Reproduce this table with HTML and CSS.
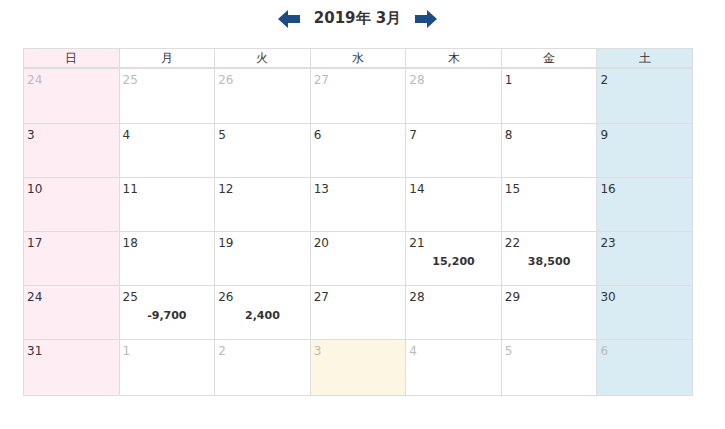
FILE: index.html
```html
<!DOCTYPE html>
<html>
<head>
<meta charset="utf-8">
<link rel="stylesheet" href="styles.css">
</head>
<body>
<div class="page">
  <div class="nav">
    <svg class="arrow" width="22" height="18" viewBox="0 0 22 18"><polygon points="0,9 10,0 10,5 22,5 22,13 10,13 10,18" fill="#1d4b83"/></svg>
    <span class="title">2019年 3月</span>
    <svg class="arrow" width="22" height="18" viewBox="0 0 22 18"><polygon points="22,9 12,0 12,5 0,5 0,13 12,13 12,18" fill="#1d4b83"/></svg>
  </div>
  <table class="cal">
    <thead>
      <tr><th class="sun">日</th><th>月</th><th>火</th><th>水</th><th>木</th><th>金</th><th class="sat">土</th></tr>
    </thead>
    <tbody>
      <tr class="first"><td class="sun other">24</td><td class="other">25</td><td class="other">26</td><td class="other">27</td><td class="other">28</td><td>1</td><td class="sat">2</td></tr>
      <tr><td class="sun">3</td><td>4</td><td>5</td><td>6</td><td>7</td><td>8</td><td class="sat">9</td></tr>
      <tr><td class="sun">10</td><td>11</td><td>12</td><td>13</td><td>14</td><td>15</td><td class="sat">16</td></tr>
      <tr><td class="sun">17</td><td>18</td><td>19</td><td>20</td><td>21<div class="amt">15,200</div></td><td>22<div class="amt">38,500</div></td><td class="sat">23</td></tr>
      <tr><td class="sun">24</td><td>25<div class="amt">-9,700</div></td><td>26<div class="amt">2,400</div></td><td>27</td><td>28</td><td>29</td><td class="sat">30</td></tr>
      <tr class="last"><td class="sun">31</td><td class="other">1</td><td class="other">2</td><td class="other today">3</td><td class="other">4</td><td class="other">5</td><td class="sat other">6</td></tr>
    </tbody>
  </table>
</div>
</body>
</html>
```
FILE: styles.css
```css
html, body { margin: 0; padding: 0; background: #fff; }
body { font-family: "DejaVu Sans", Verdana, sans-serif; color: #333; }
.page { padding: 8px 23px 0 23px; }
.nav { display: flex; justify-content: center; align-items: center; gap: 14px; height: 21px; margin-bottom: 19px; margin-left: -10px; }
.title { font-weight: bold; font-size: 15px; color: #333; }
.arrow { display: block; }
.cal { width: 670px; border-collapse: collapse; table-layout: fixed; font-size: 12px; }
.cal th { font-weight: normal; height: 18px; padding: 0; border: 1px solid #ddd; border-bottom: 2px solid #ddd; text-align: center; font-size: 12px; }
.cal td { height: 54px; padding: 4px 3px 0 3px; border: 1px solid #ddd; vertical-align: top; box-sizing: border-box; }
.cal tr.first td { height: 55px; }
.cal tr.last td { height: 56px; }
.sun { background: #feeef3; }
.sat { background: #d9ecf4; }
.today { background: #fdf6e3; }
.other { color: #bbb; }
.amt { text-align: center; font-weight: bold; font-size: 11px; margin-top: 5px; color: #333; }
```
